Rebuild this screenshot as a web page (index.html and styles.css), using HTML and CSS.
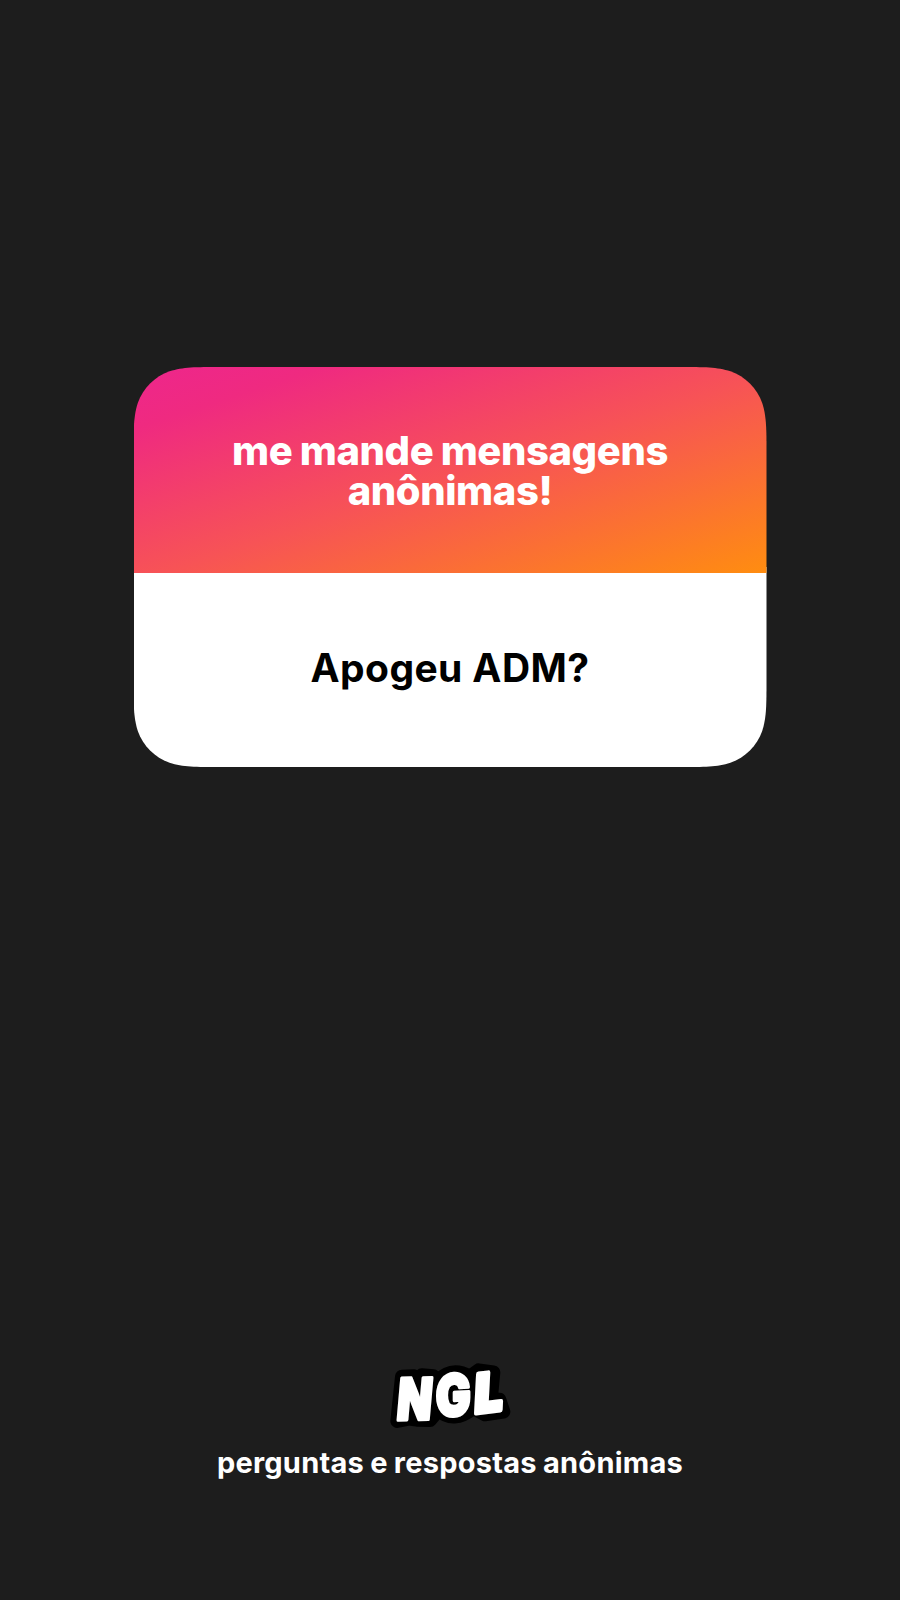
FILE: index.html
```
<!DOCTYPE html>
<html lang="pt-BR">
<head>
<meta charset="utf-8">
<title>NGL</title>
<link rel="stylesheet" href="styles.css">
</head>
<body>
<main class="story">
  <section class="card">
    <h1 class="prompt">me mande mensagens<br>anônimas!</h1>
    <p class="message"><span>Apogeu ADM?</span></p>
  </section>
  <footer class="brand">
    <svg class="logo" viewBox="0 0 480 270" role="img" aria-label="NGL">
      <path class="logo-back" d="M96 80 L132 79 L145 86 L155 76 L190 79 L205 92 Q245 50 300 80 L326 61 L370 67 L362 152 L388 149 L400 185 L345 193 L310 174 Q250 222 205 180 L180 210 L140 209 L116 206 L82 213 Z"/>
      <g class="logo-letters">
        <text transform="translate(77 210) rotate(-1) skewX(-6) scale(.79 1)">N</text>
        <text transform="translate(197 200) rotate(-3) skewX(-3) scale(.81 1)">G</text>
        <text class="logo-wide" transform="translate(312 190) rotate(-7) skewX(-10) scale(.86 .92)">L</text>
      </g>
    </svg>
    <p class="tagline"><span>perguntas e respostas anônimas</span></p>
  </footer>
</main>
</body>
</html>
```
FILE: styles.css
```
* { box-sizing: border-box; }
body {
  margin: 0;
  background: #1d1d1d;
  font-family: Inter, "Liberation Sans", sans-serif;
}
.story {
  height: 1600px;
  padding: 367px 0 117px;
  display: flex;
  flex-direction: column;
  align-items: center;
  justify-content: space-between;
}
.card {
  width: 633px;
  height: 400px;
  display: grid;
  grid-template-rows: 206px 194px;
  background: linear-gradient(transparent 200px, #fff 200px);
  text-align: center;
  clip-path: path("M87 0 H546 C571 0 583.5 0 596.9 4.3 C611.8 9.6 623.4 21.2 628.7 36.1 C633 49.5 633 62 633 87 V313 C633 338 633 350.5 628.7 363.9 C623.4 378.8 611.8 390.4 596.9 395.7 C583.5 400 571 400 546 400 H87 C62 400 49.5 400 36.1 395.7 C21.2 390.4 9.6 378.8 4.3 363.9 C0 350.5 0 338 0 313 V87 C0 62 0 49.5 4.3 36.1 C9.6 21.2 21.2 9.6 36.1 4.3 C49.5 0 62 0 87 0 Z");
}
.prompt {
  margin: 0;
  padding-top: 63.5px;
  color: #fff;
  background: linear-gradient(to bottom right, #ee268c 0%, #ef2a80 15%, #f75356 52%, #ff8d10 100%);
  font-size: 40px;
  font-weight: 850;
  line-height: 40.5px;
  letter-spacing: -.4px;
  word-spacing: -1px;
}
.message {
  margin: 0;
  padding-bottom: 6px;
  display: flex;
  align-items: center;
  justify-content: center;
  color: #000;
  font-size: 39px;
  font-weight: 700;
  letter-spacing: .4px;
}
.brand {
  display: flex;
  flex-direction: column;
  align-items: center;
}
.logo {
  width: 160px;
  height: 90px;
}
.logo-back {
  fill: #000;
  stroke: #000;
  stroke-width: 42px;
  stroke-linejoin: round;
}
.logo-letters {
  fill: #fff;
  stroke: #fff;
  stroke-width: 10px;
  stroke-linejoin: round;
  font-size: 172px;
  font-weight: 900;
}
.logo-wide {
  stroke-width: 16px;
}
.tagline {
  margin: 3px 0 0;
  color: #fff;
  font-size: 29px;
  font-weight: 650;
  line-height: 40px;
  letter-spacing: .25px;
  word-spacing: -1px;
}
```
